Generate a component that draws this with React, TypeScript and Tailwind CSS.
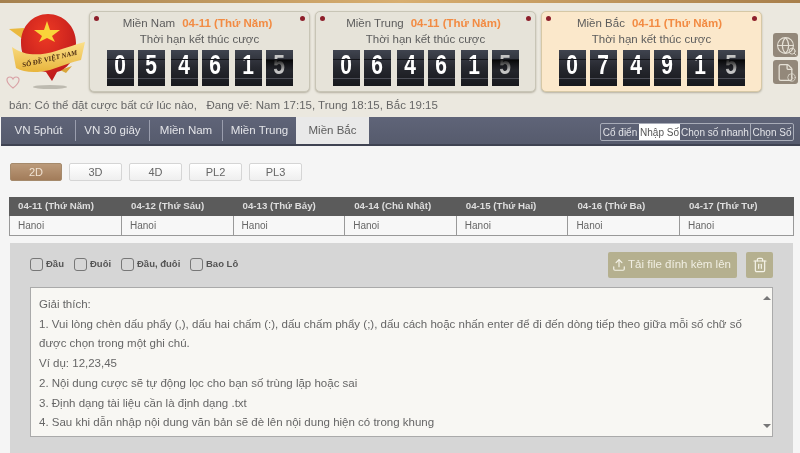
import React from "react";
import { Globe, Search, File, Clock, Upload, Trash2 } from "lucide-react";

function Flip({ d, last }: { d: string; last?: boolean }) {
  return (
    <div className="relative flex h-[36px] w-[27px] items-center justify-center overflow-hidden bg-gradient-to-b from-[#40444f] via-[#26282f] to-[#17181c] pb-[7px]">
      <span className={last ? "inline-block scale-y-[1.3] text-[21px] font-bold leading-none text-[#c4c4c4]" : "inline-block scale-y-[1.3] text-[21px] font-bold leading-none text-white"}>{d}</span>
      <div className="absolute left-0 right-0 top-[9px] h-px bg-[#14151a]" />
      <div className="absolute bottom-[7px] left-0 right-0 h-px bg-[#4a4c55]" />
      {last && <div className="absolute left-0 right-0 top-[10px] h-[11px] bg-gradient-to-b from-[#000000dd] to-transparent" />}
    </div>
  );
}

function Card({ name, digits, warm }: { name: string; digits: string; warm?: boolean }) {
  return (
    <div className={warm
      ? "relative flex h-[81px] w-[221px] shrink-0 flex-col items-center rounded-[5px] border border-[#d6c8a6] bg-[#fbe8cb] shadow-[0_1px_2px_#b5b0a0]"
      : "relative flex h-[81px] w-[221px] shrink-0 flex-col items-center rounded-[5px] border border-[#c8c5b6] bg-[#e6e3d9] shadow-[0_1px_2px_#b5b0a0]"}>
      <div className="absolute left-[4px] top-[4px] h-[5px] w-[5px] rounded-full bg-[#8e1f2b]" />
      <div className="absolute right-[4px] top-[4px] h-[5px] w-[5px] rounded-full bg-[#8e1f2b]" />
      <div className="mr-[4px] mt-[5px] flex h-[14px] items-center text-[11.5px] leading-none text-[#5c5c5c]">
        <span>{name}</span>
        <span className="ml-[7px] font-bold text-[#f28b43]">04-11 (Thứ Năm)</span>
      </div>
      <div className="mt-[1px] h-[14px] text-[11.5px] leading-[14px] text-[#5c5c5c]">Thời hạn kết thúc cược</div>
      <div className="mt-[4px] flex">
        <div className="flex gap-[4px]"><Flip d={digits[0]} /><Flip d={digits[1]} /></div>
        <div className="ml-[6px] flex gap-[4px]"><Flip d={digits[2]} /><Flip d={digits[3]} /></div>
        <div className="ml-[6px] flex gap-[4px]"><Flip d={digits[4]} /><Flip d={digits[5]} last /></div>
      </div>
    </div>
  );
}

function Logo() {
  return (
    <svg width="89" height="93" viewBox="0 3 89 93" className="shrink-0">
      <defs>
        <radialGradient id="ball" cx="0.45" cy="0.3" r="0.8">
          <stop offset="0" stopColor="#ee3a24" />
          <stop offset="1" stopColor="#b5141a" />
        </radialGradient>
        <linearGradient id="ban" x1="0" y1="0" x2="0" y2="1">
          <stop offset="0" stopColor="#fbe08a" />
          <stop offset="1" stopColor="#e8b53c" />
        </linearGradient>
      </defs>
      <ellipse cx="50" cy="87" rx="17" ry="2" fill="#bdbab0" />
      <path d="M9 29 L24 28 L24 40 Z" fill="#eab93f" />
      <path d="M60 70 L72 66 L66 73 Z" fill="#d9a63a" />
      <path d="M21 43 C21 26 33 14 48 14 C63 14 76 26 76 43 C76 60 66 70 57 72 L52 81 L46 72 C32 70 21 60 21 43 Z" fill="url(#ball)" />
      <polygon points="47,21 50,30 60,30 52,36 55,42 47,38 39,42 42,36 34,30 44,30" fill="#f9d43a" />
      <path d="M12 47 C24 56 40 56 56 51 C66 48 76 44 85 42 L81 60 C72 62 62 66 50 70 C38 73 24 73 16 68 Z" fill="url(#ban)" />
      <text x="50" y="61" textAnchor="middle" transform="rotate(-13 50 60)" className="font-['Liberation_Serif',serif] text-[7px] font-bold italic" fill="#4b2a10">SỔ ĐỀ VIỆT NAM</text>
      <path d="M13 88 C5 82 6 77 10 77 C12 77 13 79 13 79 C13 79 14 77 16 77 C20 77 21 82 13 88 Z" fill="none" stroke="#d9a2a6" strokeWidth="1.2" />
    </svg>
  );
}

function Tab({ label, w, sep }: { label: string; w: string; sep?: boolean }) {
  return (
    <div className={w + " flex h-[21px] items-center justify-center text-[11.5px] text-[#e3e4e8]" + (sep ? " border-r border-[#9a9eae]" : "")}>{label}</div>
  );
}

const dates = ["04-11 (Thứ Năm)", "04-12 (Thứ Sáu)", "04-13 (Thứ Bảy)", "04-14 (Chủ Nhật)", "04-15 (Thứ Hai)", "04-16 (Thứ Ba)", "04-17 (Thứ Tư)"];

function Check({ label, cls }: { label: string; cls: string }) {
  return (
    <div className={"flex items-center " + cls}>
      <div className="h-[13px] w-[13px] rounded-[3px] border border-[#777]" />
      <span className="ml-[3px] text-[9.5px] font-bold text-[#555]">{label}</span>
    </div>
  );
}

export default function App() {
  return (
    <div className="flex h-[453px] w-[800px] flex-col overflow-hidden bg-[#f5f5f5] font-['Liberation_Sans',Arial,sans-serif] blur-[0.45px]">
      <div className="h-[3px] bg-gradient-to-r from-[#a5814f] via-[#d8ae70] to-[#a87f4b]" />
      <div className="flex h-[114px] flex-col bg-[#ebe8df]">
        <div className="flex h-[93px]">
          <Logo />
          <div className="mt-[8px] flex gap-[5px]">
            <Card name="Miền Nam" digits="054615" />
            <Card name="Miền Trung" digits="064615" />
            <Card name="Miền Bắc" digits="074915" warm />
          </div>
          <div className="ml-[11px] mt-[30px] flex flex-col gap-[3px]">
            <div className="relative flex h-[24px] w-[25px] items-center justify-center rounded-[3px] bg-[#93887a]">
              <Globe size={19} strokeWidth={1.4} color="#e5e0d5" />
              <Search size={9} strokeWidth={2.4} color="#e5e0d5" className="absolute bottom-[1px] right-[1px]" />
            </div>
            <div className="relative flex h-[24px] w-[25px] items-center justify-center rounded-[3px] bg-[#93887a]">
              <File size={19} strokeWidth={1.6} color="#e5e0d5" />
              <Clock size={9} strokeWidth={2} color="#e5e0d5" className="absolute bottom-[2px] right-[2px]" />
            </div>
          </div>
        </div>
        <div className="mt-[1px] pl-[9px] text-[11.5px] leading-[16px] whitespace-pre text-[#666]">bán: Có thể đặt cược bất cứ lúc nào,   Đang vẽ: Nam 17:15, Trung 18:15, Bắc 19:15</div>
      </div>

      <div className="ml-[1px] flex h-[29px] items-stretch justify-between border-b-2 border-[#3f4352] bg-gradient-to-b from-[#5f6478] to-[#565b6d]">
        <div className="flex items-stretch">
          <div className="flex items-center pl-[1px]">
            <Tab label="VN 5phút" w="w-[74px]" sep />
            <Tab label="VN 30 giây" w="w-[74px]" sep />
            <Tab label="Miền Nam" w="w-[73px]" sep />
            <Tab label="Miền Trung" w="w-[73px]" />
          </div>
          <div className="flex w-[73px] items-center justify-center bg-[#e9e9e9] text-[11.5px] text-[#5c5c5c]">Miền Bắc</div>
        </div>
        <div className="mr-[6px] mt-[6px] flex h-[18px] items-center whitespace-nowrap rounded-[2px] border border-[#a8acb8] text-[10px] text-[#e3e4e8]">
          <div className="flex h-full w-[38px] items-center justify-center">Cổ điển</div>
          <div className="flex h-full w-[41px] items-center justify-center bg-white text-[#555]">Nhập Số</div>
          <div className="flex h-full w-[71px] items-center justify-center border-r border-[#a8acb8]">Chọn số nhanh</div>
          <div className="flex h-full w-[42px] items-center justify-center">Chọn Số</div>
        </div>
      </div>

      <div className="flex gap-[7px] pl-[10px] pt-[17px]">
        <div className="flex h-[18px] w-[52px] items-center justify-center rounded-[2px] border border-[#a58a6c] bg-gradient-to-b from-[#bb9a7a] to-[#a27c5a] text-[11px] text-[#f0e2d2]">2D</div>
        {["3D", "4D", "PL2", "PL3"].map((t) => (
          <div key={t} className="flex h-[18px] w-[53px] items-center justify-center rounded-[2px] border border-[#d5d5d5] bg-gradient-to-b from-white to-[#efefef] text-[11px] text-[#666]">{t}</div>
        ))}
      </div>

      <div className="ml-[9px] mr-[6px] mt-[16px] border-b border-[#999]">
        <div className="flex h-[19px] items-center bg-[#5b5b5b]">
          {dates.map((d, i) => (
            <div key={d} className={"pl-[9px] text-[9.7px] font-bold text-[#dedede] " + (i === 0 ? "w-[113px]" : "w-[111.6px]")}>{d}</div>
          ))}
        </div>
        <div className="flex h-[19px] items-center border-l border-r border-[#999] bg-[#f7f7f7]">
          {dates.map((d, i) => (
            <div key={d} className={"flex h-full items-center pl-[8px] text-[10px] text-[#666] " + (i === 0 ? "w-[112px]" : "w-[111.6px]") + (i < 6 ? " border-r border-[#999]" : "")}>Hanoi</div>
          ))}
        </div>
      </div>

      <div className="ml-[10px] mr-[7px] mt-[7px] flex min-h-0 flex-1 flex-col bg-[#d6d6d6] pl-[20px] pr-[20px] pt-[9px]">
        <div className="flex h-[26px] items-center justify-between">
          <div className="flex items-center pb-[2px]">
            <Check label="Đầu" cls="w-[44px]" />
            <Check label="Đuôi" cls="w-[47px]" />
            <Check label="Đầu, đuôi" cls="w-[69px]" />
            <Check label="Bao Lô" cls="" />
          </div>
          <div className="flex gap-[9px]">
            <div className="flex h-[26px] w-[129px] items-center justify-center rounded-[2px] bg-[#b5b08f] pr-[2px] text-[11.5px] font-medium text-[#f0eee2]">
              <Upload size={14} strokeWidth={2} color="#f5f3e8" className="mr-[2px]" />
              Tải file đính kèm lên
            </div>
            <div className="flex h-[26px] w-[27px] items-center justify-center rounded-[2px] bg-[#b5b08f]">
              <Trash2 size={16} strokeWidth={1.8} color="#f5f3e8" />
            </div>
          </div>
        </div>
        <div className="relative mt-[9px] h-[150px] border border-[#aaa] bg-[#f8f7f3] pl-[8px] pr-[30px] pt-[7px] text-[11.5px] leading-[19.7px] text-[#666]">
          <div>Giải thích:</div>
          <div>1. Vui lòng chèn dấu phẩy (,), dấu hai chấm (:), dấu chấm phẩy (;), dấu cách hoặc nhấn enter để đi đến dòng tiếp theo giữa mỗi số chữ số được chọn trong một ghi chú.</div>
          <div>Ví dụ: 12,23,45</div>
          <div>2. Nội dung cược sẽ tự động lọc cho bạn số trùng lặp hoặc sai</div>
          <div>3. Định dạng tài liệu cần là định dạng .txt</div>
          <div>4. Sau khi dẫn nhập nội dung văn bản sẽ đè lên nội dung hiện có trong khung</div>
          <div className="absolute right-[1px] top-[8px] h-0 w-0 border-x-[4px] border-b-[4px] border-x-transparent border-b-[#777]" />
          <div className="absolute bottom-[8px] right-[1px] h-0 w-0 border-x-[4px] border-t-[4px] border-x-transparent border-t-[#777]" />
        </div>
      </div>
    </div>
  );
}
